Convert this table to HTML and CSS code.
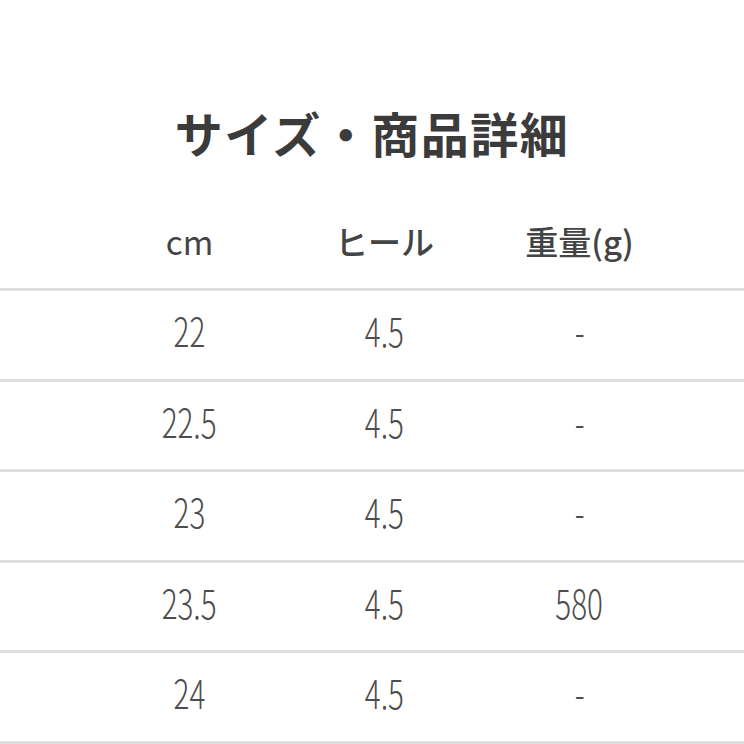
FILE: index.html
```html
<!DOCTYPE html>
<html lang="ja">
<head>
<meta charset="utf-8">
<link rel="stylesheet" href="styles.css">
</head>
<body>
<h1 class="title">サイズ・商品詳細</h1>
<div class="table">
  <div class="row head">
    <span class="cell light">cm</span><span class="cell">ヒール</span><span class="cell">重量(g)</span>
  </div>
  <div class="row data"><span class="cell"><span class="num">22</span></span><span class="cell"><span class="num">4.5</span></span><span class="cell"><span class="num">-</span></span></div>
  <div class="row data"><span class="cell"><span class="num">22.5</span></span><span class="cell"><span class="num">4.5</span></span><span class="cell"><span class="num">-</span></span></div>
  <div class="row data"><span class="cell"><span class="num">23</span></span><span class="cell"><span class="num">4.5</span></span><span class="cell"><span class="num">-</span></span></div>
  <div class="row data"><span class="cell"><span class="num">23.5</span></span><span class="cell"><span class="num">4.5</span></span><span class="cell"><span class="num">580</span></span></div>
  <div class="row data last"><span class="cell"><span class="num">24</span></span><span class="cell"><span class="num">4.5</span></span><span class="cell"><span class="num">-</span></span></div>
</div>
</body>
</html>
```
FILE: styles.css
```css
html, body {
  margin: 0;
  padding: 0;
  background: #ffffff;
  width: 744px;
  height: 744px;
  overflow: hidden;
}
body {
  font-family: "Noto Sans CJK JP", "Noto Sans", sans-serif;
  color: #444;
}
.title {
  margin: 0;
  padding-top: 107px;
  height: 50px;
  line-height: 50px;
  font-size: 48px;
  font-weight: 700;
  color: #3b3b3b;
  text-align: center;
  letter-spacing: 1.5px;
}
.table {
  display: flex;
  flex-direction: column;
}
.row {
  display: grid;
  grid-template-columns: 195px 195px 195px;
  padding-left: 92px;
}
.head {
  margin-top: 64px;
  height: 40px;
  line-height: 40px;
  padding-bottom: 27px;
  font-size: 33px;
  font-weight: 500;
  color: #444;
}
.head .light {
  font-weight: 400;
}
.cell {
  text-align: center;
}
.data {
  border-top: 3px solid #dedede;
  height: 87.5px;
  line-height: 78px;
  font-size: 40px;
  font-weight: 300;
  color: #4d4d4d;
}
.last {
  border-bottom: 3px solid #dedede;
}
.num {
  display: inline-block;
  transform: scaleX(0.74);
}
```
